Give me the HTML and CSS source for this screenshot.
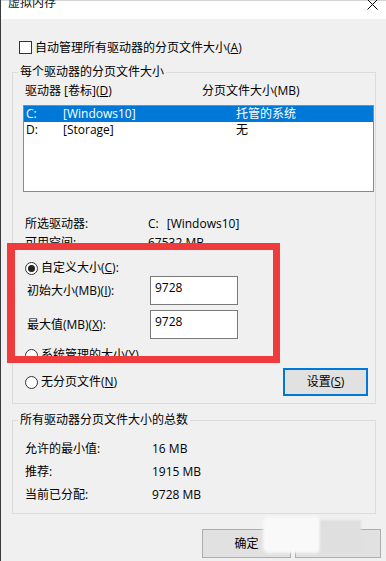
FILE: index.html
```html
<!DOCTYPE html>
<html lang="zh-CN">
<head>
<meta charset="utf-8">
<title>虚拟内存</title>
<link rel="stylesheet" href="styles.css">
</head>
<body>
<div class="window">
  <div class="titlebar">
    <span class="title">虚拟内存</span>
    <svg class="close" width="11" height="11" viewBox="0 0 11 11"><path d="M0.5 0.5 L10.5 10.5 M10.5 0.5 L0.5 10.5" stroke="#000" stroke-width="1" fill="none"/></svg>
  </div>

  <div class="autorow"><span class="checkbox"></span><span>自动管理所有驱动器的分页文件大小(<u>A</u>)</span></div>

  <fieldset class="group group1">
    <legend>每个驱动器的分页文件大小</legend>
    <div class="head"><span>驱动器 [卷标](<u>D</u>)</span><span>分页文件大小(MB)</span></div>
    <div class="listbox">
      <div class="lrow sel"><span>C:</span><span>[Windows10]</span><span>托管的系统</span></div>
      <div class="lrow"><span>D:</span><span>[Storage]</span><span>无</span></div>
    </div>
    <div class="info">
      <span>所选驱动器:</span><span><span class="drv">C:</span>[Windows10]</span>
      <span>可用空间:</span><span>67532 MB</span>
    </div>
    <div class="radio-row custom"><span class="radio checked"></span><span>自定义大小(<u>C</u>):</span></div>
    <div class="field"><span class="flabel">初始大小(MB)(<u>I</u>):</span><div class="input">9728</div></div>
    <div class="field second"><span class="flabel">最大值(MB)(<u>X</u>):</span><div class="input">9728</div></div>
    <div class="radio-row sys"><span class="radio"></span><span>系统管理的大小(<u>Y</u>)</span></div>
    <div class="bottomrow">
      <div class="radio-row"><span class="radio"></span><span>无分页文件(<u>N</u>)</span></div>
      <div class="btn default">设置(<u>S</u>)</div>
    </div>
  </fieldset>

  <fieldset class="group group2">
    <legend>所有驱动器分页文件大小的总数</legend>
    <div class="totals">
      <span>允许的最小值:</span><span>16 MB</span>
      <span>推荐:</span><span>1915 MB</span>
      <span>当前已分配:</span><span>9728 MB</span>
    </div>
  </fieldset>

  <div class="actions">
    <div class="btn ok">确定</div>
    <div class="btn cancel">取消</div>
  </div>

  <div class="highlight"></div>
  <div class="smudge-white"></div>
  <div class="smudge-grey"></div>
</div>
</body>
</html>
```
FILE: styles.css
```css
html, body {
  margin: 0;
  padding: 0;
}
body {
  background: #f0f0f0;
  font-family: "Open Sans", "Noto Sans CJK SC", sans-serif;
  font-size: 12px;
  color: #000;
  width: 386px;
  height: 561px;
  overflow: hidden;
}
.window {
  position: relative;
  height: 561px;
  border-left: 1px solid #3a3a3a;
  box-sizing: border-box;
}
.titlebar {
  height: 19px;
  background: #fff;
  border-top: 1px solid #d4d4d4;
  box-sizing: border-box;
  display: flex;
  justify-content: space-between;
  align-items: flex-start;
  padding: 0 8px 0 7px;
}
.title {
  line-height: 12px;
  margin-top: -4px;
  color: #111;
}
.close {
  margin-top: -2px;
}
.autorow {
  display: flex;
  align-items: center;
  gap: 3px;
  height: 13px;
  margin-top: 22px;
  padding-left: 18px;
  line-height: 16px;
}
.checkbox {
  width: 13px;
  height: 13px;
  box-sizing: border-box;
  border: 1px solid #333;
  background: #fff;
}
u {
  text-decoration: underline;
  text-underline-offset: 1px;
}
.group {
  margin: 11px 10px 0 11px;
  padding: 4px 7px 7px 12px;
  border: 1px solid #dcdcdc;
  min-width: 0;
}
.group legend {
  padding: 0 2px;
  margin-left: -7px;
  line-height: 14px;
}
.head {
  display: grid;
  grid-template-columns: 177px auto;
  line-height: 16px;
  height: 16px;
}
.listbox {
  margin-top: 6px;
  margin-left: -2px;
  width: 351px;
  height: 87px;
  box-sizing: border-box;
  border: 1px solid #8a8a8a;
  background: #fff;
}
.lrow {
  display: grid;
  grid-template-columns: 37px 173px auto;
  height: 16px;
  line-height: 16px;
  padding-left: 2px;
}
.lrow.sel {
  background: #0078d7;
  color: #fff;
}
.info {
  display: grid;
  grid-template-columns: 123px auto;
  line-height: 19px;
  margin-top: 22px;
}
.drv {
  margin-right: 8px;
}
.radio-row {
  display: flex;
  align-items: center;
  gap: 3px;
  height: 16px;
  line-height: 16px;
}
.radio {
  width: 13px;
  height: 13px;
  box-sizing: border-box;
  border: 1px solid #333;
  border-radius: 50%;
  background: #fff;
  display: flex;
  align-items: center;
  justify-content: center;
}
.radio.checked::after {
  content: "";
  width: 7px;
  height: 7px;
  border-radius: 50%;
  background: #222;
}
.custom {
  margin-top: 8px;
}
.field {
  display: grid;
  grid-template-columns: 125px 88px;
  align-items: center;
}
.field.second {
  margin-top: 5px;
}
.flabel {
  padding-left: 2px;
  line-height: 16px;
}
.input {
  height: 29px;
  box-sizing: border-box;
  border: 1px solid #7a7a7a;
  background: #fff;
  padding: 3px 4px;
  line-height: 16px;
}
.sys {
  margin-top: 8px;
}
.bottomrow {
  margin-top: 5px;
  display: flex;
  justify-content: space-between;
  align-items: center;
}
.btn {
  box-sizing: border-box;
  border: 1px solid #adadad;
  background: #e1e1e1;
  display: flex;
  align-items: center;
  justify-content: center;
  line-height: 16px;
}
.btn.default {
  width: 85px;
  height: 28px;
  border-color: #0078d7;
  box-shadow: inset 0 0 0 1px #0078d7;
}
.group2 {
  margin-top: 9px;
  padding: 10px 7px 7px 12px;
}
.totals {
  display: grid;
  grid-template-columns: 127px auto;
  line-height: 23px;
}
.actions {
  margin-top: 15px;
  display: flex;
  justify-content: flex-end;
  gap: 4px;
  padding-right: 5px;
}
.btn.ok {
  width: 89px;
  height: 29px;
}
.btn.cancel {
  width: 86px;
  height: 29px;
}
.highlight {
  position: absolute;
  left: 6px;
  top: 243px;
  width: 273px;
  height: 120px;
  box-sizing: border-box;
  border: 7px solid #ef3b3c;
  border-left-width: 8px;
}
.smudge-white {
  position: absolute;
  left: 262px;
  top: 517px;
  width: 58px;
  height: 36px;
  background: #f9f9f9;
  border-radius: 6px;
  filter: blur(1.5px);
}
.smudge-grey {
  position: absolute;
  left: 319px;
  top: 520px;
  width: 41px;
  height: 32px;
  background: #dfdfdf;
  filter: blur(0.8px);
}
```
